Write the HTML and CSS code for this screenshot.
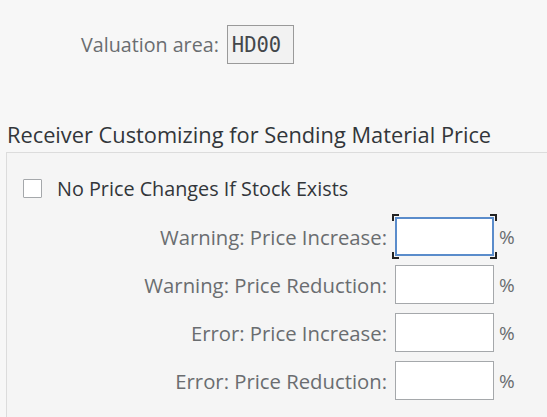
FILE: index.html
```html
<!DOCTYPE html>
<html>
<head>
<meta charset="utf-8">
<link rel="stylesheet" href="styles.css">
</head>
<body>
<div class="page">
  <div class="top-row">
    <span class="top-label">Valuation area:</span>
    <span class="readonly-field">HD00</span>
  </div>
  <h2 class="section-title">Receiver Customizing for Sending Material Price</h2>
  <div class="group">
    <label class="check-row">
      <span class="checkbox"></span>
      <span class="check-text">No Price Changes If Stock Exists</span>
    </label>
    <div class="form-grid">
      <span class="f-label">Warning: Price Increase:</span>
      <span class="input focused"><span class="br tl"></span><span class="br tr"></span><span class="br bl"></span><span class="br bbr"></span></span>
      <span class="unit">%</span>

      <span class="f-label">Warning: Price Reduction:</span>
      <span class="input"></span>
      <span class="unit">%</span>

      <span class="f-label">Error: Price Increase:</span>
      <span class="input"></span>
      <span class="unit">%</span>

      <span class="f-label">Error: Price Reduction:</span>
      <span class="input"></span>
      <span class="unit">%</span>
    </div>
  </div>
</div>
</body>
</html>
```
FILE: styles.css
```css
html, body {
  margin: 0;
  padding: 0;
  background: #f7f7f7;
  overflow: hidden;
}
.page {
  font-family: "Open Sans", "Noto Sans", sans-serif;
  color: #32363a;
  width: 547px;
  height: 417px;
  overflow: hidden;
}
.top-row {
  display: flex;
  align-items: center;
  padding: 25px 0 0 81px;
  height: 39px;
  gap: 8px;
}
.top-label {
  font-size: 19.7px;
  line-height: 24px;
  color: #6a6d70;
}
.readonly-field {
  box-sizing: border-box;
  width: 67px;
  height: 39px;
  border: 1px solid #9a9a9a;
  background: #f2f2f2;
  font-family: "DejaVu Sans Mono", monospace;
  font-size: 20.5px;
  color: #43474b;
  display: flex;
  align-items: center;
  padding-left: 4px;
}
.section-title {
  margin: 56px 0 0 7px;
  font-size: 21.8px;
  font-weight: normal;
  line-height: 30px;
  height: 30px;
  color: #32363a;
}
.group {
  margin: 2px 0 0 6px;
  width: 600px;
  height: 300px;
  border: 1px solid #dcdcdc;
  background: #f5f5f5;
  box-sizing: border-box;
  padding: 26px 0 0 16px;
}
.check-row {
  display: flex;
  align-items: center;
  gap: 15px;
  height: 19px;
}
.checkbox {
  box-sizing: border-box;
  width: 19px;
  height: 19px;
  border: 1px solid #a5a8ab;
  background: #fff;
  border-radius: 1px;
}
.check-text {
  font-size: 19.8px;
  line-height: 24px;
  color: #32363a;
}
.form-grid {
  display: grid;
  grid-template-columns: 364px 99px auto;
  grid-auto-rows: 39px;
  row-gap: 9px;
  column-gap: 8px;
  align-items: center;
  margin-top: 19px;
  width: 520px;
}
.f-label {
  justify-self: end;
  font-size: 20.3px;
  line-height: 24px;
  color: #6a6d70;
}
.input {
  position: relative;
  box-sizing: border-box;
  height: 39px;
  width: 99px;
  background: #fff;
  border: 1px solid #a5a8ab;
}
.input.focused {
  border: 2px solid #5a8ccb;
}
.unit {
  font-size: 19px;
  line-height: 24px;
  color: #6a6d70;
  margin-left: -3px;
}
.br {
  position: absolute;
  width: 5px;
  height: 5px;
  border: 0 solid #222;
}
.tl { left: -5px; top: -5px; border-left-width: 2px; border-top-width: 2px; }
.tr { right: -5px; top: -5px; border-right-width: 2px; border-top-width: 2px; }
.bl { left: -5px; bottom: -5px; border-left-width: 2px; border-bottom-width: 2px; }
.bbr { right: -5px; bottom: -5px; border-right-width: 2px; border-bottom-width: 2px; }
```
